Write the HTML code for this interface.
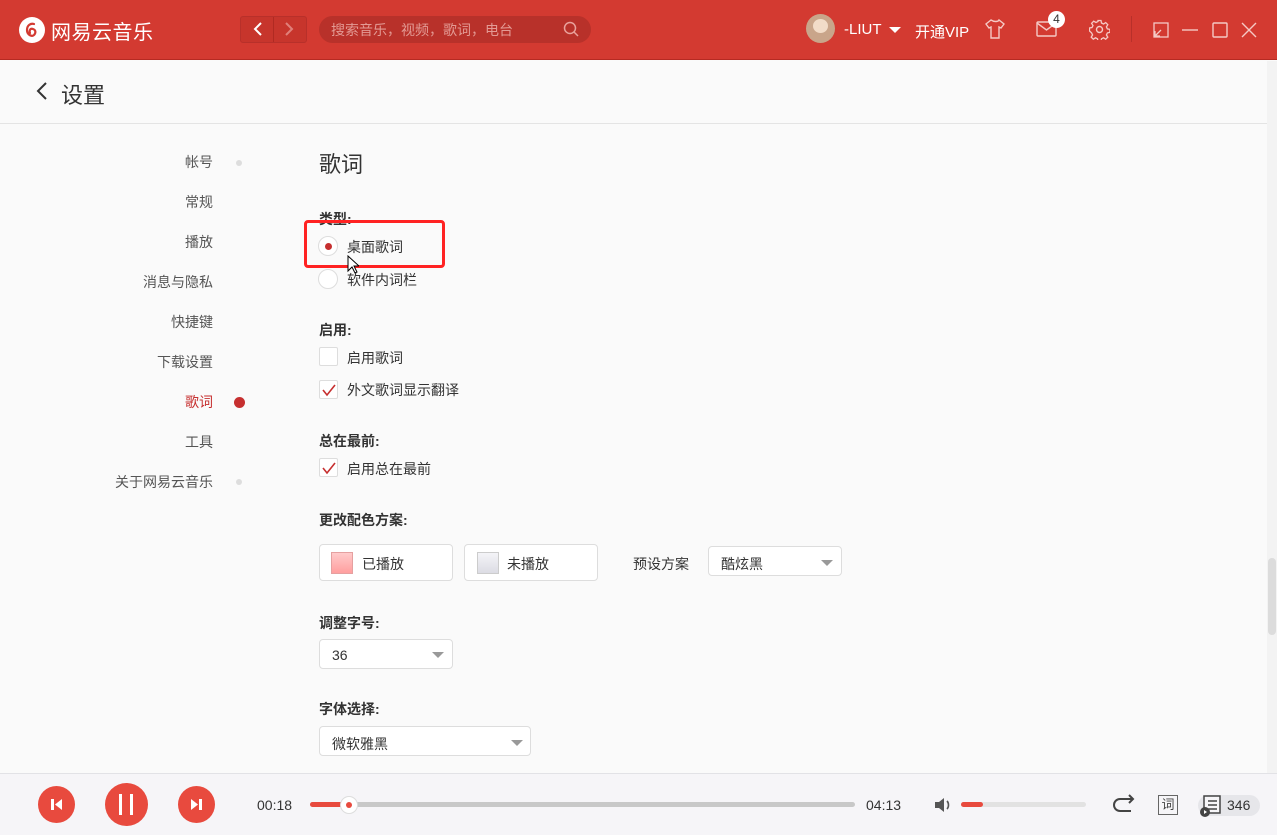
<!DOCTYPE html>
<html><head><meta charset="utf-8"><style>
*{margin:0;padding:0;box-sizing:border-box}
body{width:1277px;height:835px;overflow:hidden;background:#fafafa;font-family:"Liberation Sans","Noto Sans CJK SC",sans-serif;color:#333;position:relative;font-size:14px}
.a{position:absolute}
.hdr{left:0;top:0;width:1277px;height:60px;background:#d33a31;border-bottom:1px solid #b52a22}
.w{color:#fff}
.lbl{font-size:14px;color:#333;font-weight:bold}
.opt{font-size:14px;color:#333}
.cb{width:19px;height:19px;border:1px solid #ddd;background:#fff;border-radius:2px}
.nav{right:1064px;font-size:14px;color:#555;text-align:right}
.dot{width:6px;height:6px;border-radius:50%;background:#ddd;left:236px}
.box{border:1px solid #ddd;border-radius:4px;background:#fff}
.tri{width:0;height:0;border-left:6px solid transparent;border-right:6px solid transparent;border-top:6px solid #999}
</style></head><body>
<div class="a hdr"></div>
<div class="a" style="left:19px;top:17px;width:26px;height:26px;border-radius:50%;background:#fff"></div>
<svg class="a" style="left:19px;top:17px" width="26" height="26" viewBox="0 0 26 26"><path d="M15 7c-3-1-7 1-7 6s5 7 7 5 2-5-1-6-4 2-3 4" fill="none" stroke="#d33a31" stroke-width="2.2" stroke-linecap="round"/></svg>
<div class="a w" style="left:51px;top:16px;font-size:20px;letter-spacing:0.5px">网易云音乐</div>
<div class="a" style="left:240px;top:16px;width:67px;height:27px;border:1px solid #b8302a;border-radius:3px;background:#c7352c"></div>
<div class="a" style="left:273px;top:17px;width:1px;height:25px;background:#b02a22"></div>
<svg class="a" style="left:250px;top:21px" width="50" height="16"><path d="M11 2L5 8l6 6" stroke="#fff" stroke-width="2" fill="none"/><path d="M36 2l6 6-6 6" stroke="#e0807a" stroke-width="2" fill="none"/></svg>
<div class="a" style="left:319px;top:16px;width:272px;height:27px;border-radius:14px;background:#b8312a"></div>
<div class="a" style="left:331px;top:20px;color:#e39a94;font-size:14px">搜索音乐，视频，歌词，电台</div>
<svg class="a" style="left:562px;top:20px" width="18" height="18"><circle cx="8" cy="8" r="5.5" stroke="#e9a29c" stroke-width="1.5" fill="none"/><path d="M12 12l4 4" stroke="#e9a29c" stroke-width="1.5"/></svg>
<div class="a" style="left:806px;top:14px;width:29px;height:29px;border-radius:50%;background:#c9a58a"></div>
<div class="a" style="left:813px;top:19px;width:15px;height:14px;border-radius:50%;background:#f2dcc8"></div>
<div class="a w" style="left:844px;top:21px;font-size:15px">-LIUT</div>
<div class="a" style="left:889px;top:27px;border-left:6px solid transparent;border-right:6px solid transparent;border-top:6px solid #fff;width:0"></div>
<div class="a w" style="left:915px;top:21px;font-size:15px">开通VIP</div>
<svg class="a" style="left:984px;top:18px" width="22" height="22"><path d="M7 2L2 6l3 4 2-1v11h8V9l2 1 3-4-5-4c-1 2-5 2-8 0z" stroke="#f5c9c5" stroke-width="1.4" fill="none"/></svg>
<svg class="a" style="left:1036px;top:20px" width="22" height="18"><rect x="1" y="2" width="19" height="14" rx="1" stroke="#f5c9c5" stroke-width="1.4" fill="none"/><path d="M1 3l9.5 7L20 3" stroke="#f5c9c5" stroke-width="1.4" fill="none"/></svg>
<div class="a" style="left:1048px;top:11px;width:17px;height:17px;border-radius:50%;background:#fff;color:#333;font-size:12px;text-align:center;line-height:17px">4</div>
<svg class="a" style="left:1089px;top:19px" width="21" height="21" viewBox="0 0 21 21"><circle cx="10.5" cy="10.5" r="3" stroke="#f5c9c5" stroke-width="1.4" fill="none"/><path d="M9 1.5h3l.5 2.5 2 1 2.2-1.4 2.1 2.1-1.4 2.2 1 2 2.5.5v3l-2.5.5-1 2 1.4 2.2-2.1 2.1-2.2-1.4-2 1-.5 2.5H9l-.5-2.5-2-1-2.2 1.4-2.1-2.1 1.4-2.2-1-2L0.5 12V9l2.5-.5 1-2L2.6 4.3l2.1-2.1L7 3.5l2-1z" stroke="#f5c9c5" stroke-width="1.3" fill="none"/></svg>
<div class="a" style="left:1131px;top:16px;width:1px;height:26px;background:#b8302a"></div>
<svg class="a" style="left:1152px;top:21px" width="110" height="18"><rect x="2" y="2" width="14" height="14" stroke="#f5c9c5" stroke-width="1.3" fill="none"/><path d="M3 15l6-6M3 10v5h5" stroke="#f5c9c5" stroke-width="1.3" fill="none"/><path d="M30 9h16" stroke="#f5c9c5" stroke-width="1.4"/><rect x="61" y="2" width="14" height="14" rx="1" stroke="#f5c9c5" stroke-width="1.4" fill="none"/><path d="M90 2l14 14M104 2L90 16" stroke="#f5c9c5" stroke-width="1.4"/></svg>
<div class="a" style="left:0;top:123px;width:1277px;height:1px;background:#e4e4e4"></div>
<svg class="a" style="left:36px;top:82px" width="12" height="18"><path d="M10 1L2 9l8 8" stroke="#333" stroke-width="2" fill="none"/></svg>
<div class="a" style="left:61px;top:78px;font-size:22px;color:#333">设置</div>
<div class="a" style="left:1267px;top:61px;width:10px;height:712px;background:#f3f3f3"></div>
<div class="a" style="left:1268px;top:558px;width:8px;height:77px;border-radius:4px;background:#dcdcdc"></div>
<div class="a nav" style="top:152px">帐号</div><div class="a dot" style="top:160px"></div>
<div class="a nav" style="top:192px">常规</div>
<div class="a nav" style="top:232px">播放</div>
<div class="a nav" style="top:272px">消息与隐私</div>
<div class="a nav" style="top:312px">快捷键</div>
<div class="a nav" style="top:352px">下载设置</div>
<div class="a nav" style="top:392px;color:#c62f2f">歌词</div>
<div class="a" style="left:234px;top:397px;width:11px;height:11px;border-radius:50%;background:#c62f2f"></div>
<div class="a nav" style="top:432px">工具</div>
<div class="a nav" style="top:472px">关于网易云音乐</div><div class="a dot" style="top:479px"></div>
<div class="a" style="left:319px;top:147px;font-size:22px;color:#333">歌词</div>
<div class="a lbl" style="left:319px;top:209px">类型:</div>
<div class="a" style="left:318px;top:236px;width:20px;height:20px;border-radius:50%;border:1px solid #ddd;background:#fff"></div>
<div class="a" style="left:325px;top:243px;width:7px;height:7px;border-radius:50%;background:#c62f2f"></div>
<div class="a opt" style="left:347px;top:237px">桌面歌词</div>
<div class="a" style="left:318px;top:269px;width:20px;height:20px;border-radius:50%;border:1px solid #ddd;background:#fff"></div>
<div class="a opt" style="left:347px;top:270px">软件内词栏</div>
<div class="a" style="left:304px;top:220px;width:141px;height:48px;border:3px solid #f22;border-radius:4px"></div>
<svg class="a" style="left:347px;top:255px" width="12" height="20"><path d="M1 1v15l4-4 3 6 2-1-3-6h5z" fill="#fff" stroke="#000" stroke-width="1"/></svg>
<div class="a lbl" style="left:319px;top:320px">启用:</div>
<div class="a cb" style="left:319px;top:347px"></div>
<div class="a opt" style="left:347px;top:348px">启用歌词</div>
<div class="a cb" style="left:319px;top:380px"></div>
<svg class="a" style="left:321px;top:382px" width="16" height="16"><path d="M2 8l4 5 8-10" stroke="#c62f2f" stroke-width="1.6" fill="none"/></svg>
<div class="a opt" style="left:347px;top:380px">外文歌词显示翻译</div>
<div class="a lbl" style="left:319px;top:431px">总在最前:</div>
<div class="a cb" style="left:319px;top:458px"></div>
<svg class="a" style="left:321px;top:460px" width="16" height="16"><path d="M2 8l4 5 8-10" stroke="#c62f2f" stroke-width="1.6" fill="none"/></svg>
<div class="a opt" style="left:347px;top:459px">启用总在最前</div>
<div class="a lbl" style="left:319px;top:510px">更改配色方案:</div>
<div class="a box" style="left:319px;top:544px;width:134px;height:37px"></div>
<div class="a" style="left:331px;top:552px;width:22px;height:22px;border:1px solid #e5a0a0;background:linear-gradient(#ffcaca,#ff9f9f)"></div>
<div class="a opt" style="left:362px;top:554px">已播放</div>
<div class="a box" style="left:464px;top:544px;width:134px;height:37px"></div>
<div class="a" style="left:477px;top:552px;width:22px;height:22px;border:1px solid #ccc;background:linear-gradient(#f4f4f8,#dcdce4)"></div>
<div class="a opt" style="left:507px;top:554px">未播放</div>
<div class="a opt" style="left:633px;top:554px">预设方案</div>
<div class="a box" style="left:708px;top:546px;width:134px;height:30px"></div>
<div class="a opt" style="left:721px;top:554px">酷炫黑</div>
<div class="a tri" style="left:821px;top:560px"></div>
<div class="a lbl" style="left:319px;top:613px">调整字号:</div>
<div class="a box" style="left:319px;top:639px;width:134px;height:30px"></div>
<div class="a opt" style="left:332px;top:647px">36</div>
<div class="a tri" style="left:432px;top:652px"></div>
<div class="a lbl" style="left:319px;top:699px">字体选择:</div>
<div class="a box" style="left:319px;top:726px;width:212px;height:30px"></div>
<div class="a opt" style="left:332px;top:734px">微软雅黑</div>
<div class="a tri" style="left:511px;top:740px"></div>
<div class="a" style="left:0;top:773px;width:1277px;height:62px;background:#f6f5f8;border-top:1px solid #e2e2e6"></div>
<div class="a" style="left:38px;top:786px;width:37px;height:37px;border-radius:50%;background:#e84a3e"></div>
<svg class="a" style="left:38px;top:786px" width="37" height="37"><rect x="13" y="13" width="3" height="11" fill="#fff"/><path d="M24 13v11l-7-5.5z" fill="#fff"/></svg>
<div class="a" style="left:105px;top:783px;width:43px;height:43px;border-radius:50%;background:#e84a3e"></div>
<div class="a" style="left:119px;top:794px;width:3px;height:21px;background:#fff"></div>
<div class="a" style="left:130px;top:794px;width:3px;height:21px;background:#fff"></div>
<div class="a" style="left:178px;top:786px;width:37px;height:37px;border-radius:50%;background:#e84a3e"></div>
<svg class="a" style="left:178px;top:786px" width="37" height="37"><path d="M13 13v11l7-5.5z" fill="#fff"/><rect x="21" y="13" width="3" height="11" fill="#fff"/></svg>
<div class="a" style="left:257px;top:797px;font-size:14px;color:#333">00:18</div>
<div class="a" style="left:310px;top:802px;width:545px;height:5px;border-radius:3px;background:#c8c8c8"></div>
<div class="a" style="left:310px;top:802px;width:40px;height:5px;border-radius:3px;background:#e84a3e"></div>
<div class="a" style="left:340px;top:796px;width:18px;height:18px;border-radius:50%;background:#fff;border:1px solid #ddd"></div>
<div class="a" style="left:346px;top:802px;width:6px;height:6px;border-radius:50%;background:#e84a3e"></div>
<div class="a" style="left:866px;top:797px;font-size:14px;color:#333">04:13</div>
<svg class="a" style="left:934px;top:796px" width="22" height="18"><path d="M1 6h4l5-4v14l-5-4H1z" fill="#555"/><path d="M13 5c2 2 2 6 0 8" stroke="#555" stroke-width="1.6" fill="none"/></svg>
<div class="a" style="left:961px;top:802px;width:125px;height:5px;border-radius:3px;background:#e2e2e2"></div>
<div class="a" style="left:961px;top:802px;width:22px;height:5px;border-radius:3px;background:#e84a3e"></div>
<svg class="a" style="left:1112px;top:794px" width="26" height="22"><path d="M20 5H8a6 6 0 0 0 0 12h11" stroke="#444" stroke-width="2" fill="none"/><path d="M17 1l4 4-4 4" stroke="#444" stroke-width="2" fill="none"/></svg>
<div class="a" style="left:1158px;top:795px;width:20px;height:20px;border:1px solid #666;font-size:13px;text-align:center;line-height:18px;color:#444">词</div>
<div class="a" style="left:1198px;top:795px;width:62px;height:21px;border-radius:11px;background:#e6e6ea"></div>
<svg class="a" style="left:1199px;top:794px" width="24" height="24"><rect x="5" y="2" width="16" height="17" stroke="#444" stroke-width="1.5" fill="#f6f5f8"/><path d="M9 7h9M9 11h9M9 15h9" stroke="#444" stroke-width="1.5"/><circle cx="6" cy="18" r="5" fill="#444"/><path d="M5 16v4l3-2z" fill="#fff"/></svg>
<div class="a" style="left:1227px;top:797px;font-size:14px;color:#333">346</div>
</body></html>
